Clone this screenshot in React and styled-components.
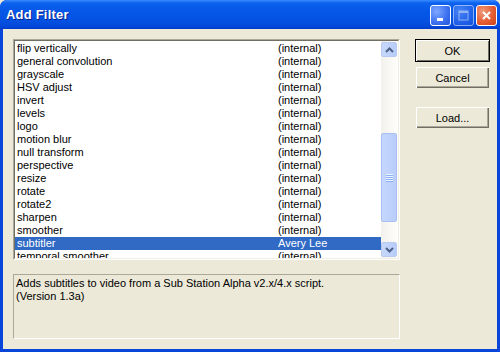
import React from 'react'
import styled, { createGlobalStyle } from 'styled-components'

const Global = createGlobalStyle`
  html, body { margin: 0; padding: 0; background: #ECE9D8; }
  body { font-family: Tahoma, "Liberation Sans", Arial, sans-serif; font-size: 11px; }
`

const filters = [
  ['flip vertically', '(internal)'],
  ['general convolution', '(internal)'],
  ['grayscale', '(internal)'],
  ['HSV adjust', '(internal)'],
  ['invert', '(internal)'],
  ['levels', '(internal)'],
  ['logo', '(internal)'],
  ['motion blur', '(internal)'],
  ['null transform', '(internal)'],
  ['perspective', '(internal)'],
  ['resize', '(internal)'],
  ['rotate', '(internal)'],
  ['rotate2', '(internal)'],
  ['sharpen', '(internal)'],
  ['smoother', '(internal)'],
  ['subtitler', 'Avery Lee'],
  ['temporal smoother', '(internal)'],
]

const Window = styled.div`
  width: 500px;
  height: 352px;
  display: flex;
  flex-direction: column;
  background: #0845D8;
  border-radius: 7px 7px 0 0;
  overflow: hidden;
`

const TitleBar = styled.div`
  height: 29px;
  flex: none;
  display: flex;
  align-items: center;
  padding: 0 3px 0 6px;
  box-sizing: border-box;
  background: linear-gradient(#3A8CFF 0px, #0B62EE 3px, #0758E8 10px, #0452E2 20px, #0347D8 27px, #0239C8 29px);
`

const Title = styled.div`
  flex: 1;
  color: #fff;
  font-family: "Liberation Sans", Arial, sans-serif;
  font-weight: bold;
  font-size: 13px;
  letter-spacing: 0.2px;
  text-shadow: 1px 1px 0 #0A1E8C;
`

const Caps = styled.div`
  display: flex;
  gap: 2px;
  margin-top: 1px;
`

const CapButton = styled.div`
  width: 21px;
  height: 21px;
  box-sizing: border-box;
  border: 1px solid #fff;
  border-radius: 3px;
  display: flex;
  align-items: center;
  justify-content: center;
  background: ${p => p.$close
    ? 'radial-gradient(circle at 30% 30%, #F19A7C, #E25A2E 60%, #C9421D)'
    : 'radial-gradient(circle at 30% 30%, #7FA8FF, #3A6FEF 60%, #2457DB)'};
  opacity: ${p => (p.$disabled ? 0.55 : 1)};
`

const Client = styled.div`
  flex: 1;
  margin: 0 3px 3px 3px;
  background: #ECE9D8;
  display: grid;
  grid-template-columns: 387px 75px;
  column-gap: 15px;
  padding: 10px 0 0 10px;
  box-sizing: border-box;
`

const Main = styled.div`
  display: flex;
  flex-direction: column;
`

const ListBox = styled.div`
  height: 221px;
  box-sizing: border-box;
  border-top: 1px solid #ACA899;
  border-left: 1px solid #ACA899;
  border-right: 1px solid #fff;
  border-bottom: 1px solid #fff;
  display: flex;
  background: #fff;
`

const ListInner = styled.div`
  flex: 1;
  display: flex;
  border-top: 1px solid #716F64;
  border-left: 1px solid #716F64;
  border-right: 1px solid #F1EFE2;
  border-bottom: 1px solid #F1EFE2;
`

const Rows = styled.div`
  flex: 1;
  overflow: hidden;
  padding-top: 1px;
`

const Row = styled.div`
  height: 13px;
  line-height: 13px;
  display: grid;
  grid-template-columns: 261px 1fr;
  padding-left: 2px;
  color: ${p => (p.$selected ? '#fff' : '#000')};
  background: ${p => (p.$selected ? '#316AC5' : 'transparent')};
  white-space: nowrap;
`

const Scrollbar = styled.div`
  width: 17px;
  flex: none;
  display: flex;
  flex-direction: column;
  padding: 1px 1px 1px 0;
  box-sizing: border-box;
  background: linear-gradient(90deg, #F3F1EC, #FEFEFB);
`

const ArrowButton = styled.div`
  height: 15px;
  flex: none;
  box-sizing: border-box;
  border: 1px solid #B9C9EF;
  border-radius: 2px;
  background: linear-gradient(90deg, #C8D8FC, #B7CCF9);
  display: flex;
  align-items: center;
  justify-content: center;
`

const Track = styled.div`
  flex: 1;
  display: flex;
  flex-direction: column;
  padding: 76px 0 20px;
`

const Thumb = styled.div`
  flex: 1;
  box-sizing: border-box;
  border: 1px solid #A8BEF5;
  border-radius: 2px;
  background: linear-gradient(90deg, #C6D7FD, #B9CDFA);
  display: flex;
  align-items: center;
  justify-content: center;
`

const Description = styled.div`
  margin-top: 14px;
  height: 65px;
  box-sizing: border-box;
  border-top: 1px solid #ACA899;
  border-left: 1px solid #ACA899;
  border-right: 1px solid #fff;
  border-bottom: 1px solid #fff;
  padding: 2px 2px;
  line-height: 13px;
  color: #000;
`

const Buttons = styled.div`
  display: flex;
  flex-direction: column;
`

const Button = styled.div`
  height: 23px;
  box-sizing: border-box;
  margin-top: ${p => p.$gap || 0}px;
  display: flex;
  align-items: center;
  justify-content: center;
  background: #ECE9D8;
  color: #000;
  border: 1px solid ${p => (p.$default ? '#000' : '#ECE9D8')};
  box-shadow: inset 1px 1px 0 #fff, inset -1px -1px 0 #716F64, inset -2px -2px 0 #ACA899;
  ${p => p.$default && 'box-shadow: inset 1px 1px 0 #fff, inset -1px -1px 0 #716F64;'}
`

const Chevron = ({ up }) => (
  <svg width="9" height="6" viewBox="0 0 9 6">
    <path d={up ? 'M1 5 L4.5 1.5 L8 5' : 'M1 1 L4.5 4.5 L8 1'} fill="none" stroke="#4D6185" strokeWidth="2" />
  </svg>
)

const Grip = () => (
  <svg width="7" height="8" viewBox="0 0 7 8">
    {[0, 2, 4, 6].map(y => (
      <line key={y} x1="0" y1={y + 0.5} x2="7" y2={y + 0.5} stroke="#EEF4FE" />
    ))}
    {[1, 3, 5, 7].map(y => (
      <line key={y} x1="0" y1={y + 0.5} x2="7" y2={y + 0.5} stroke="#8CB0F8" />
    ))}
  </svg>
)

export default function App() {
  return (
    <>
      <Global />
      <Window>
        <TitleBar>
          <Title>Add Filter</Title>
          <Caps>
            <CapButton>
              <svg width="13" height="13" viewBox="0 0 13 13">
                <rect x="3" y="9" width="6" height="3" fill="#fff" />
              </svg>
            </CapButton>
            <CapButton $disabled>
              <svg width="13" height="13" viewBox="0 0 13 13">
                <rect x="2" y="2" width="9" height="9" fill="none" stroke="#fff" />
                <rect x="2" y="2" width="9" height="2" fill="#fff" />
              </svg>
            </CapButton>
            <CapButton $close>
              <svg width="13" height="13" viewBox="0 0 13 13">
                <path d="M3 3 L10 10 M10 3 L3 10" stroke="#fff" strokeWidth="2" />
              </svg>
            </CapButton>
          </Caps>
        </TitleBar>
        <Client>
          <Main>
            <ListBox>
              <ListInner>
                <Rows>
                  {filters.map(([name, author]) => (
                    <Row key={name} $selected={name === 'subtitler'}>
                      <span>{name}</span>
                      <span>{author}</span>
                    </Row>
                  ))}
                </Rows>
                <Scrollbar>
                  <ArrowButton><Chevron up /></ArrowButton>
                  <Track>
                    <Thumb><Grip /></Thumb>
                  </Track>
                  <ArrowButton><Chevron /></ArrowButton>
                </Scrollbar>
              </ListInner>
            </ListBox>
            <Description>
              Adds subtitles to video from a Sub Station Alpha v2.x/4.x script.
              <br />
              (Version 1.3a)
            </Description>
          </Main>
          <Buttons>
            <Button $default>OK</Button>
            <Button $gap={4}>Cancel</Button>
            <Button $gap={17}>Load...</Button>
          </Buttons>
        </Client>
      </Window>
    </>
  )
}
